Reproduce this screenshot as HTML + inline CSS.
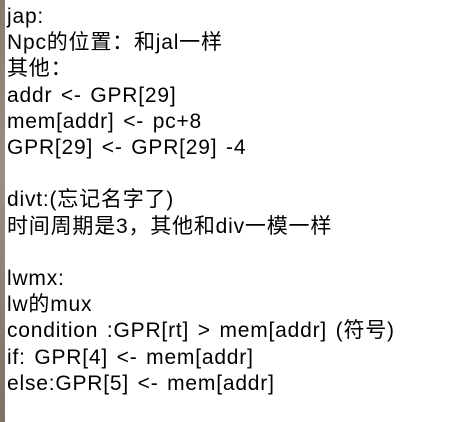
<!DOCTYPE html>
<html><head><meta charset="utf-8"><style>
html,body{margin:0;padding:0;width:452px;height:422px;overflow:hidden;background:#fff;}
.strip{position:absolute;left:0;top:0;width:5px;height:422px;background:linear-gradient(#8a7a6e,#9c8e82 40%,#7f7064);}
.t{position:absolute;left:7px;top:4px;font-family:"Liberation Sans","Noto Sans CJK SC",sans-serif;font-size:21px;letter-spacing:0.8px;word-spacing:2px;line-height:26.2px;color:#000;white-space:pre;}
</style></head><body>
<div class="strip"></div>
<div class="t">jap:
Npc的位置：和jal一样
其他：
addr &lt;- GPR[29]
mem[addr] &lt;- pc+8
GPR[29] &lt;- GPR[29] -4

divt:(忘记名字了)
时间周期是3，其他和div一模一样

lwmx:
lw的mux
condition :GPR[rt] &gt; mem[addr] (符号)
if: GPR[4] &lt;- mem[addr]
else:GPR[5] &lt;- mem[addr]</div>
</body></html>
